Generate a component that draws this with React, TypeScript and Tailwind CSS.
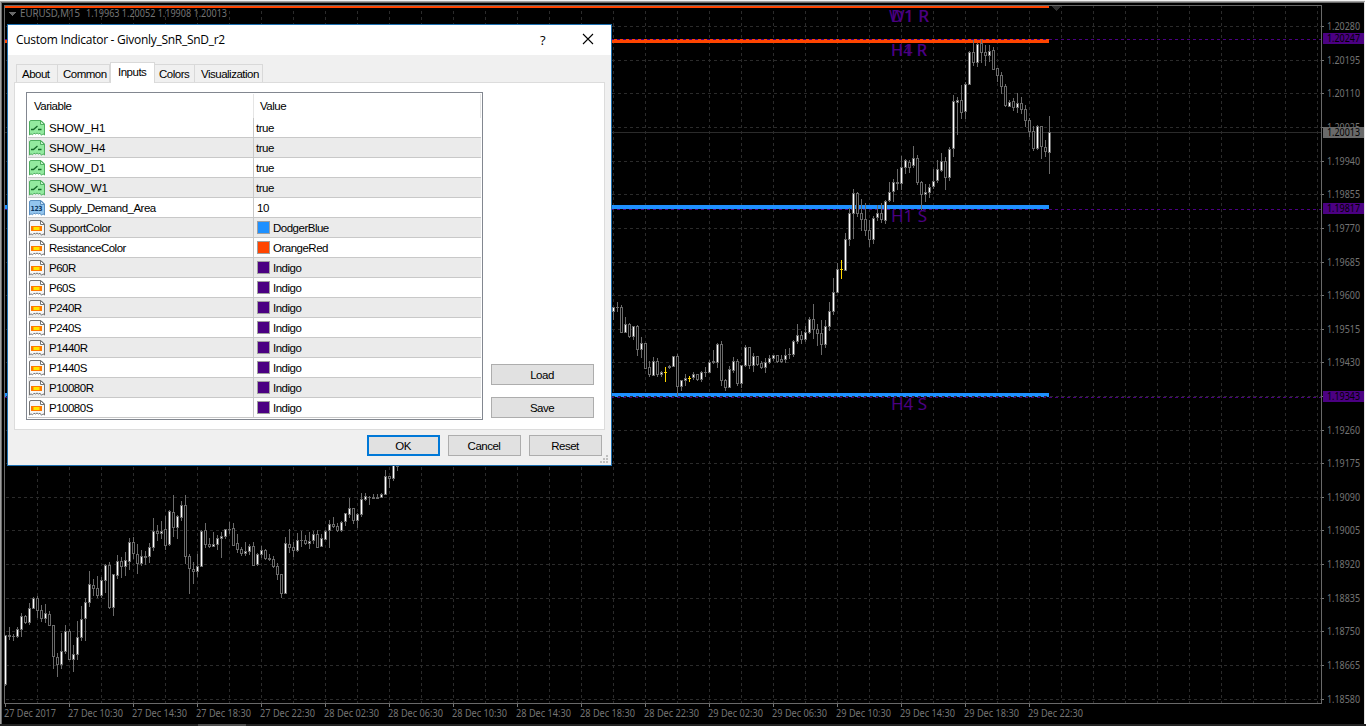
import React from 'react';
import clsx from 'clsx';

type CandleKind = 'up' | 'down' | 'doji';
type Candle = [number, number, number, number, CandleKind];

const UP: CandleKind = 'up';
const DN: CandleKind = 'down';
const DJ: CandleKind = 'doji';

const GRAY = '#696969';
const GRID = '#2b2b2b';

// high, body top, body bottom, low, kind
const firstCandles: Candle[] = [
  [635, 635, 684, 685, UP], [627, 635, 636, 639, DJ], [634, 636, 636, 640, DJ], [627, 629, 636, 637, UP],
  [613, 616, 629, 636, UP], [615, 616, 622, 623, DN], [603, 608, 622, 624, UP], [597, 598, 608, 608, UP],
  [596, 598, 610, 617, DN], [605, 610, 618, 621, DN], [604, 613, 618, 622, UP], [611, 614, 625, 625, DN],
  [625, 625, 656, 668, DN], [653, 657, 664, 676, DN], [633, 651, 664, 668, UP], [625, 631, 651, 653, UP],
  [629, 631, 659, 659, DN], [645, 654, 659, 671, UP], [621, 637, 654, 659, UP], [606, 619, 637, 640, UP],
  [598, 602, 618, 640, UP], [571, 584, 602, 606, UP], [579, 585, 588, 595, DN], [576, 588, 595, 597, DN],
  [577, 580, 595, 597, UP], [564, 565, 580, 592, UP], [562, 565, 607, 608, DN], [574, 574, 607, 615, UP],
  [555, 561, 575, 578, UP], [557, 561, 566, 577, DN], [552, 560, 566, 575, UP], [538, 542, 561, 569, UP],
  [537, 542, 553, 558, DN], [544, 554, 563, 573, DN], [550, 556, 563, 565, UP], [551, 556, 557, 564, DJ],
  [543, 547, 556, 562, UP], [518, 531, 547, 550, UP], [525, 531, 533, 540, DN], [521, 531, 533, 538, UP],
  [516, 529, 545, 549, DN], [510, 511, 544, 545, UP], [495, 512, 527, 536, DN], [515, 516, 527, 538, UP],
  [501, 505, 517, 520, UP], [495, 505, 556, 563, DN], [554, 556, 568, 593, DN], [562, 569, 571, 583, DN],
  [554, 566, 571, 576, UP], [530, 531, 566, 566, UP], [523, 530, 544, 547, DN], [538, 544, 546, 547, DN],
  [532, 544, 546, 546, UP], [535, 538, 544, 549, UP], [532, 536, 538, 557, UP], [529, 529, 536, 538, UP],
  [522, 529, 529, 533, DJ], [523, 528, 545, 545, DN], [534, 543, 549, 552, DN], [547, 549, 553, 555, DN],
  [542, 551, 553, 555, UP], [544, 546, 551, 554, UP], [542, 546, 565, 565, DN], [553, 554, 564, 565, UP],
  [546, 550, 554, 557, UP], [549, 550, 558, 559, DN], [554, 558, 559, 560, DJ], [556, 559, 566, 567, DN],
  [563, 566, 574, 579, DN], [574, 574, 593, 597, DN], [537, 543, 593, 593, UP], [529, 544, 547, 552, DN],
  [542, 547, 550, 556, DN], [533, 540, 550, 551, UP], [531, 540, 540, 546, DJ], [535, 540, 543, 544, DN],
  [532, 541, 543, 548, UP], [531, 534, 540, 543, UP], [530, 534, 547, 547, DN], [534, 538, 546, 546, UP],
  [530, 531, 539, 539, UP], [520, 524, 530, 547, UP], [517, 524, 526, 527, DN], [523, 526, 530, 531, DN],
  [521, 522, 530, 531, UP], [513, 513, 521, 525, UP], [498, 508, 514, 517, UP], [508, 508, 520, 523, DN],
  [513, 514, 520, 527, UP], [493, 499, 514, 516, UP], [493, 496, 499, 500, UP], [496, 497, 497, 504, DJ],
  [494, 497, 498, 498, DJ], [494, 497, 498, 498, DJ], [493, 494, 497, 497, UP], [470, 476, 494, 494, UP],
  [476, 476, 478, 487, DN], [460, 464, 478, 480, UP], [460, 465, 466, 470, DJ],
];

const lastCandles: Candle[] = [
  [307, 307, 311, 319, UP], [302, 307, 307, 311, DJ], [305, 307, 332, 332, DN], [317, 324, 332, 332, UP],
  [323, 324, 336, 337, DN], [326, 326, 336, 339, UP], [325, 326, 349, 355, DN], [337, 343, 349, 357, UP],
  [343, 343, 368, 368, DN], [361, 367, 374, 376, DN], [357, 361, 375, 375, UP], [358, 361, 374, 376, DN],
  [371, 372, 374, 376, UP], [367, 372, 372, 381, DJ], [365, 366, 367, 368, DJ], [356, 356, 366, 366, UP],
  [354, 356, 386, 395, DN], [380, 380, 386, 390, UP], [374, 378, 380, 385, UP], [376, 378, 378, 381, DJ],
  [372, 374, 377, 379, UP], [374, 374, 379, 380, DN], [371, 372, 379, 381, UP], [367, 372, 372, 376, DJ],
  [360, 362, 372, 372, UP], [350, 361, 362, 363, DJ], [343, 344, 362, 367, UP], [341, 344, 380, 385, DN],
  [379, 380, 387, 390, DN], [366, 369, 387, 387, UP], [357, 361, 370, 372, UP], [359, 361, 383, 385, DN],
  [365, 365, 383, 387, UP], [345, 347, 365, 366, UP], [347, 347, 365, 368, DN], [353, 356, 365, 371, UP],
  [356, 356, 364, 365, DN], [361, 363, 367, 368, DN], [358, 362, 367, 372, UP], [355, 358, 362, 363, UP],
  [355, 355, 358, 360, UP], [355, 355, 361, 362, DN], [355, 359, 361, 362, DN], [349, 355, 359, 362, UP],
  [348, 354, 354, 358, DJ], [340, 341, 354, 356, UP], [324, 335, 341, 343, UP], [331, 335, 339, 343, DN],
  [326, 332, 339, 341, UP], [317, 319, 332, 333, UP], [304, 319, 329, 338, DN], [324, 329, 333, 345, DN],
  [320, 333, 344, 354, DN], [320, 326, 344, 347, UP], [302, 311, 326, 330, UP], [278, 292, 311, 314, UP],
  [263, 269, 292, 292, UP], [260, 269, 269, 278, DJ], [233, 239, 270, 270, UP], [208, 213, 239, 245, UP],
  [189, 193, 213, 238, UP], [192, 193, 213, 216, DN], [199, 213, 219, 230, DN], [203, 219, 230, 235, DN],
  [220, 230, 239, 246, DN], [216, 218, 239, 243, UP], [205, 213, 217, 220, UP], [203, 213, 219, 222, DN],
  [200, 201, 220, 223, UP], [182, 192, 200, 201, UP], [179, 182, 191, 201, UP], [169, 182, 183, 189, DJ],
  [156, 167, 183, 189, UP], [159, 160, 167, 173, UP], [160, 162, 167, 172, DN], [146, 158, 165, 167, UP],
  [155, 158, 182, 184, DN], [181, 182, 194, 209, DN], [184, 192, 194, 201, UP], [184, 187, 192, 197, UP],
  [169, 181, 186, 188, UP], [160, 169, 180, 182, UP], [153, 161, 170, 171, UP], [157, 161, 177, 189, DN],
  [147, 149, 177, 180, UP], [95, 101, 148, 156, UP], [97, 100, 102, 134, UP], [85, 100, 112, 118, DN],
  [82, 84, 111, 118, UP], [51, 52, 84, 84, UP], [40, 52, 62, 65, DN], [43, 44, 62, 66, UP],
  [39, 43, 52, 62, DN], [45, 52, 55, 65, DN], [45, 51, 55, 61, UP], [47, 50, 69, 69, DN],
  [68, 68, 75, 81, DN], [72, 75, 86, 93, DN], [84, 86, 105, 106, DN], [100, 102, 106, 106, UP],
  [98, 101, 107, 110, DN], [93, 103, 107, 112, UP], [97, 103, 109, 113, DN], [105, 109, 120, 126, DN],
  [118, 120, 131, 136, DN], [126, 131, 148, 150, DN], [125, 126, 148, 149, UP], [126, 126, 146, 158, DN],
  [140, 147, 151, 156, DN], [116, 132, 152, 173, UP],
];

const highlighted = [665, 689, 841];

const gridX = Array.from({ length: 41 }, (_, i) => 37 + i * 32);

const prices: [number, string][] = [
  [26, '1.20280'], [60, '1.20195'], [93, '1.20110'], [127, '1.20025'], [161, '1.19940'], [194, '1.19855'],
  [228, '1.19770'], [262, '1.19685'], [295, '1.19600'], [329, '1.19515'], [362, '1.19430'], [396, '1.19345'],
  [430, '1.19260'], [463, '1.19175'], [497, '1.19090'], [530, '1.19005'], [564, '1.18920'], [598, '1.18835'],
  [631, '1.18750'], [665, '1.18665'], [699, '1.18580'],
];

const priceTags = [
  { y: 33, text: '1.20247', fill: '#4b0082' },
  { y: 127, text: '1.20013', fill: GRAY },
  { y: 203, text: '1.19817', fill: '#4b0082' },
  { y: 391, text: '1.19343', fill: '#4b0082' },
];

const dates = [
  '27 Dec 2017', '27 Dec 10:30', '27 Dec 14:30', '27 Dec 18:30', '27 Dec 22:30',
  '28 Dec 02:30', '28 Dec 06:30', '28 Dec 10:30', '28 Dec 14:30', '28 Dec 18:30', '28 Dec 22:30',
  '29 Dec 02:30', '29 Dec 06:30', '29 Dec 10:30', '29 Dec 14:30', '29 Dec 18:30', '29 Dec 22:30',
];

const zoneLabels = [
  { x: 889, y: 22, text: 'W1 R', width: 40 },
  { x: 891, y: 22, text: 'D1 R', width: 38 },
  { x: 891, y: 56, text: 'H1 R', width: 36 },
  { x: 891, y: 56, text: 'H4 R', width: 36 },
  { x: 891, y: 222, text: 'H1 S', width: 36 },
  { x: 891, y: 410, text: 'H4 S', width: 36 },
];

function CandleShape({ x, candle }: { x: number; candle: Candle }) {
  const [high, top, bottom, low, kind] = candle;
  const color = highlighted.includes(x) ? '#ffd700' : GRAY;
  return (
    <g>
      <rect x={x} y={high} width={1} height={low - high + 1} fill={color} />
      <rect x={x - 1} y={top} width={3} height={bottom - top + 1} fill={color} />
      {kind !== 'doji' && (
        <rect x={x} y={top + 1} width={1} height={Math.max(bottom - top - 1, 1)} fill={kind === 'up' ? '#fff' : '#000'} />
      )}
    </g>
  );
}

function Chart() {
  return (
    <svg width={1366} height={726} className="block" shapeRendering="crispEdges">
      <rect width={1366} height={726} fill="#000" />

      {gridX.map((x) => (
        <line key={x} x1={x + 0.5} x2={x + 0.5} y1={5} y2={703} stroke={GRID} strokeDasharray="3 3" />
      ))}

      {/* Support and resistance zones */}
      <rect x={5} y={6} width={1044} height={2} fill="#ff4500" />
      <rect x={5} y={39} width={1044} height={4} fill="#ff4500" />
      <rect x={5} y={205} width={1044} height={4} fill="#1e90ff" />
      <rect x={5} y={393} width={1044} height={4} fill="#1e90ff" />

      {prices.map(([y]) => (
        <line key={y} x1={6} x2={1321} y1={y + 0.5} y2={y + 0.5} stroke={GRID} strokeDasharray="3 3" />
      ))}
      <rect x={5} y={132} width={1316} height={1} fill={GRID} />
      {[39, 209, 397].map((y) => (
        <line key={y} x1={5} x2={1321} y1={y + 0.5} y2={y + 0.5} stroke="#4b0082" strokeDasharray="3 3" />
      ))}

      {firstCandles.map((candle, i) => (
        <CandleShape key={i} x={5 + i * 4} candle={candle} />
      ))}
      {lastCandles.map((candle, i) => (
        <CandleShape key={i} x={613 + i * 4} candle={candle} />
      ))}

      <g fill="#4b0082" fontFamily="'Noto Sans', sans-serif" fontSize={16.5}>
        {zoneLabels.map((label) => (
          <text key={label.text} x={label.x} y={label.y} textLength={label.width} lengthAdjust="spacingAndGlyphs">
            {label.text}
          </text>
        ))}
      </g>

      {/* Plot frame */}
      <rect x={4} y={5} width={1318} height={1} fill={GRAY} />
      <rect x={4} y={5} width={1} height={699} fill={GRAY} />
      <rect x={4} y={703} width={1318} height={1} fill={GRAY} />
      <rect x={1321} y={5} width={1} height={699} fill={GRAY} />
      <polygon points="1051,6 1061,6 1056,11" fill="#303030" />
      <polygon points="8,12 16,12 12,16" fill={GRAY} />

      <g fill="#747474" fontFamily="'Noto Sans', sans-serif" fontSize={10}>
        <text x={20} y={17} textLength={60} lengthAdjust="spacingAndGlyphs">EURUSD,M15</text>
        <text x={86} y={17} textLength={141} lengthAdjust="spacingAndGlyphs">1.19963 1.20052 1.19908 1.20013</text>
        {prices.map(([y, text]) => (
          <g key={y}>
            <rect x={1322} y={y} width={2} height={1} />
            <text x={1327} y={y + 4} textLength={33} lengthAdjust="spacingAndGlyphs">{text}</text>
          </g>
        ))}
        {dates.map((date, i) => (
          <g key={date}>
            <rect x={5 + i * 64} y={704} width={1} height={3} />
            <text x={4 + i * 64} y={716.5} textLength={i === 0 ? 52 : 55} lengthAdjust="spacingAndGlyphs">{date}</text>
          </g>
        ))}
        {priceTags.map((tag) => (
          <g key={tag.y}>
            <rect x={1323} y={tag.y} width={41} height={11} fill={tag.fill} />
            <text x={1327} y={tag.y + 9} textLength={33} lengthAdjust="spacingAndGlyphs" fill="#000">{tag.text}</text>
          </g>
        ))}
      </g>

      {/* Window edges */}
      <rect x={0} y={0} width={1366} height={1} fill="#f0f0f0" />
      <rect x={0} y={1} width={1365} height={1} fill="#a0a0a0" />
      <rect x={0} y={2} width={1365} height={1} fill={GRAY} />
      <rect x={0} y={1} width={1} height={723} fill="#a0a0a0" />
      <rect x={1} y={2} width={1} height={722} fill={GRAY} />
      <rect x={1364} y={2} width={1} height={722} fill="#e3e3e3" />
      <rect x={1365} y={0} width={1} height={724} fill="#fff" />
      <rect x={0} y={724} width={1366} height={2} fill="#222" />
      <rect x={198} y={724} width={48} height={2} fill="#4d4d4d" />
    </svg>
  );
}

type IconKind = 'bool' | 'int' | 'color';

function RowIcon({ kind }: { kind: IconKind }) {
  const stroke = kind === 'bool' ? '#4fae60' : kind === 'int' ? '#5a8fc0' : '#747474';
  const fill = kind === 'bool' ? '#93ea9f' : kind === 'int' ? '#93c5ee' : '#f6f6f6';
  return (
    <svg width={16} height={16} viewBox="0 0 16 16" className="shrink-0">
      <path
        d="M.5 15V2Q.5.5 2 .5H12L15.5 4V15L14 13.8L12.5 15.3L11 13.2L9.5 14L8 13L6.5 14L5 13.2L3.5 14.8L2 13.8Z"
        fill={fill}
        stroke={stroke}
      />
      <path d="M11.5.5V4.5H15.5Z" fill="#fff" fillOpacity={0.5} stroke={stroke} />
      {kind === 'bool' && <path d="M2 9.5H4.5L8.5 6M9 9.5H12.5" fill="none" stroke="#176a2a" strokeWidth={1.3} />}
      {kind === 'int' && (
        <text x={1.6} y={11.2} fontSize={7} fontWeight={700} fontFamily="'DejaVu Sans', sans-serif" textLength={11.5} lengthAdjust="spacingAndGlyphs" fill="#0d3763">
          123
        </text>
      )}
      {kind === 'color' && (
        <>
          <rect x={2} y={6} width={11} height={5} fill="#ff7a00" />
          <rect x={4} y={7} width={7} height={3} fill="#ffb400" />
          <rect x={5} y={7} width={5} height={3} fill="#ffe600" />
        </>
      )}
    </svg>
  );
}

interface InputRow {
  name: string;
  value: string;
  kind: IconKind;
  swatch?: string;
}

const inputs: InputRow[] = [
  { name: 'SHOW_H1', value: 'true', kind: 'bool' },
  { name: 'SHOW_H4', value: 'true', kind: 'bool' },
  { name: 'SHOW_D1', value: 'true', kind: 'bool' },
  { name: 'SHOW_W1', value: 'true', kind: 'bool' },
  { name: 'Supply_Demand_Area', value: '10', kind: 'int' },
  { name: 'SupportColor', value: 'DodgerBlue', kind: 'color', swatch: 'bg-[#1e90ff]' },
  { name: 'ResistanceColor', value: 'OrangeRed', kind: 'color', swatch: 'bg-[#ff4500]' },
  { name: 'P60R', value: 'Indigo', kind: 'color', swatch: 'bg-[#4b0082]' },
  { name: 'P60S', value: 'Indigo', kind: 'color', swatch: 'bg-[#4b0082]' },
  { name: 'P240R', value: 'Indigo', kind: 'color', swatch: 'bg-[#4b0082]' },
  { name: 'P240S', value: 'Indigo', kind: 'color', swatch: 'bg-[#4b0082]' },
  { name: 'P1440R', value: 'Indigo', kind: 'color', swatch: 'bg-[#4b0082]' },
  { name: 'P1440S', value: 'Indigo', kind: 'color', swatch: 'bg-[#4b0082]' },
  { name: 'P10080R', value: 'Indigo', kind: 'color', swatch: 'bg-[#4b0082]' },
  { name: 'P10080S', value: 'Indigo', kind: 'color', swatch: 'bg-[#4b0082]' },
];

const tabs = [
  { label: 'About', className: 'w-[42px] h-[18px] pl-[5px]' },
  { label: 'Common', className: 'w-[52px] h-[18px] pl-[5px] border-l-0 tracking-[-0.5px]' },
  { label: 'Inputs', className: 'w-[45px] h-[21px] -mb-px pb-[3px] pl-[7px] bg-white border-b-0' },
  { label: 'Colors', className: 'w-[40px] h-[18px] pl-[4px] border-l-0' },
  { label: 'Visualization', className: 'w-[68px] h-[18px] pl-[6px] border-l-0' },
];

function Button({ label, className }: { label: string; className: string }) {
  return (
    <button className={clsx('flex items-center justify-center bg-[#e1e1e1] pr-px', className)}>{label}</button>
  );
}

function InputsTable() {
  return (
    <div className="h-[328px] w-[457px] border border-[#828790] bg-white px-px pt-px">
      <div className="flex h-6 items-center">
        <div className="flex h-full w-[226px] items-center border-r border-[#e5e5e5] pl-1.5">Variable</div>
        <div className="flex h-full flex-1 items-center border-r border-[#e5e5e5] pl-1.5">Value</div>
      </div>
      {inputs.map((row, i) => (
        <div key={row.name} className={clsx('flex h-5 border-b border-[#c8c8c8]', i % 2 === 1 && 'bg-[#ebebeb]')}>
          <div className="flex w-[226px] items-center gap-1 border-r border-[#c8c8c8] pl-px">
            <RowIcon kind={row.kind} />
            <span className={row.kind === 'bool' ? 'tracking-[-0.1px]' : ''}>{row.name}</span>
          </div>
          <div className="flex items-center pl-[3px]">
            {row.swatch && <span className={clsx('mr-[3px] size-[13px] border border-[#a0a0a0]', row.swatch)} />}
            <span className={row.kind === 'bool' ? '-ml-px' : ''}>{row.value}</span>
          </div>
        </div>
      ))}
    </div>
  );
}

function IndicatorDialog() {
  return (
    <div className="absolute left-[7px] top-6 flex h-[442px] w-[605px] flex-col border border-[#1c6fb0] bg-[#f0f0f0] font-['Liberation_Sans',Arial,sans-serif] text-[11.5px] leading-[14px] tracking-[-0.5px] text-black">
      <div className="flex h-[30px] items-center bg-white pl-2">
        <h1 className="w-[517px] whitespace-nowrap font-['Open_Sans','Noto_Sans',sans-serif] text-[12px] tracking-[-0.28px]">
          Custom Indicator - Givonly_SnR_SnD_r2
        </h1>
        <span className="w-[49px] pb-px pl-[7px] font-['Open_Sans','Noto_Sans',sans-serif] text-[13px] font-medium">?</span>
        <svg width={12} height={12} viewBox="0 0 12 12" stroke="#000" strokeWidth={1.1} className="mb-0.5">
          <path d="M1 1L11 11M11 1L1 11" />
        </svg>
      </div>

      <div className="flex h-[27px] items-end pl-2">
        {tabs.map((tab) => (
          <div key={tab.label} className={clsx('relative flex items-center border border-b-0 border-[#d9d9d9]', tab.className)}>
            {tab.label}
          </div>
        ))}
      </div>

      <div className="ml-1.5 flex h-[348px] w-[591px] gap-2 border border-[#dcdcdc] bg-white pl-[11px] pt-[9px]">
        <InputsTable />
        <div className="flex flex-col gap-3 pt-[272px]">
          <Button label="Load" className="h-[21px] w-[103px] border border-[#adadad]" />
          <Button label="Save" className="h-[21px] w-[103px] border border-[#adadad]" />
        </div>
      </div>

      <div className="flex items-start gap-2 pl-[359px] pt-[5px]">
        <Button label="OK" className="h-[21px] w-[73px] border-2 border-[#0078d7]" />
        <Button label="Cancel" className="h-[21px] w-[73px] border border-[#adadad]" />
        <Button label="Reset" className="h-[21px] w-[73px] border border-[#adadad]" />
      </div>

      <svg width={8} height={8} className="absolute bottom-0.5 right-[3px]" fill="#bfbfbf" shapeRendering="crispEdges">
        <path d="M6 0h2v2h-2zM3 3h2v2h-2zM6 3h2v2h-2zM0 6h2v2h-2zM3 6h2v2h-2zM6 6h2v2h-2z" />
      </svg>
    </div>
  );
}

export default function App() {
  return (
    <main className="relative h-[726px] w-[1366px] overflow-hidden bg-black">
      <Chart />
      <IndicatorDialog />
    </main>
  );
}
